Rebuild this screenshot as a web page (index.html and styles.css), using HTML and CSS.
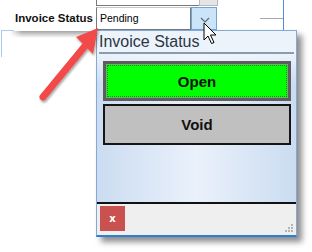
FILE: index.html
```html
<html>
<head>
    <link rel="stylesheet" href="styles.css">
    <title>Invoice Status</title>
</head>
<body>

<!-- bits of the form behind the dropdown -->
<div class="behind behind_box"></div>
<div class="behind behind_btn"></div>
<div class="behind behind_line"></div>
<div class="behind behind_rule"></div>
<div class="behind left_box"></div>
<div class="behind left_shadow"></div>

<div class="field_row">
    <label class="field_label">Invoice Status</label>
    <div class="combo_text">Pending</div>
    <div class="combo_button">
        <svg width="26" height="22" viewBox="0 0 26 22">
            <polyline points="9,10 13,14 17,10" fill="none" stroke="#5f6b78" stroke-width="1.2"/>
        </svg>
    </div>
</div>

<!-- dropdown popup -->
<div class="popup">
    <div class="popup_title">Invoice Status</div>
    <div class="title_rule"></div>
    <div class="popup_body">
        <button class="choice choice_open" type="button">Open</button>
        <button class="choice choice_void" type="button">Void</button>
    </div>
    <div class="popup_sep"></div>
    <div class="popup_footer">
        <button class="close_btn" type="button">x</button>
        <svg class="grip" width="10" height="10" viewBox="0 0 10 10">
            <rect x="7" y="1" width="2" height="2" fill="#b4b4b4"/>
            <rect x="4" y="4" width="2" height="2" fill="#b4b4b4"/>
            <rect x="7" y="4" width="2" height="2" fill="#b4b4b4"/>
            <rect x="1" y="7" width="2" height="2" fill="#b4b4b4"/>
            <rect x="4" y="7" width="2" height="2" fill="#b4b4b4"/>
            <rect x="7" y="7" width="2" height="2" fill="#b4b4b4"/>
        </svg>
    </div>
</div>

<!-- annotation arrow -->
<svg class="annotation" width="312" height="252" viewBox="0 0 312 252">
    <defs>
        <filter id="soft" x="-20%" y="-20%" width="140%" height="140%">
            <feDropShadow dx="1" dy="2" stdDeviation="1.2" flood-color="#000" flood-opacity="0.35"/>
        </filter>
    </defs>
    <g filter="url(#soft)">
        <line x1="43" y1="97" x2="85" y2="46" stroke="#f24a4a" stroke-width="7" stroke-linecap="round"/>
        <polygon points="98,28 76,37 93,54" fill="#f24a4a"/>
    </g>
</svg>

<!-- mouse pointer -->
<svg class="pointer" width="16" height="24" viewBox="0 0 16 24">
    <path d="M1,1 L1,18 L5,14 L8.5,21.5 L11,20.5 L7.5,13 L13,13 Z" fill="#fff" stroke="#000" stroke-width="1" stroke-linejoin="miter"/>
</svg>

</body>
</html>
```

FILE: styles.css
```css
body {
    margin: 0;
    width: 312px;
    height: 252px;
    position: relative;
    overflow: hidden;
    background-color: white;
    font-family: "Liberation Sans", Arial, sans-serif;
}

/* form pieces peeking out at the top */
.behind {
    position: absolute;
}
.behind_box {
    left: 96px;
    top: -2px;
    width: 102px;
    height: 6px;
    border: 1px solid #7a7a7a;
    background: white;
}
.behind_btn {
    left: 199px;
    top: -2px;
    width: 17px;
    height: 6px;
    border: 1px solid #b9b9b9;
    background: #e5e5e5;
}
.behind_line {
    left: 283px;
    top: 0;
    width: 1px;
    height: 30px;
    background: #4d8fd6;
}
.behind_rule {
    left: 260px;
    top: 18px;
    width: 23px;
    height: 1px;
    background: #a8a8a8;
}
.left_box {
    left: 1px;
    top: 30px;
    width: 12px;
    height: 26px;
    border-top: 1px solid #a9cbee;
    border-left: 1px solid #a9cbee;
}
.left_shadow {
    left: 10px;
    top: 31px;
    width: 86px;
    height: 7px;
    background: linear-gradient(to bottom, rgba(90,90,90,0.55), rgba(255,255,255,0));
    -webkit-mask-image: linear-gradient(to right, transparent, black 12px);
}

/* combo box row */
.field_row {
    display: flex;
    align-items: stretch;
    margin-top: 7px;
    height: 23px;
    padding-left: 15px;
}
.field_label {
    width: 81px;
    font-weight: bold;
    font-size: 11.5px;
    line-height: 23px;
    color: #111;
}
.combo_text {
    box-sizing: border-box;
    width: 95px;
    padding-left: 3px;
    border: 1px solid #7a7a7a;
    border-top-color: #c8c8c8;
    font-size: 10.5px;
    line-height: 20px;
    color: #000;
    background: white;
}
.combo_button {
    box-sizing: border-box;
    width: 26px;
    border: 1px solid #6ea6da;
    background: #cce4f7;
}
.combo_button svg {
    display: block;
}

/* popup */
.popup {
    position: absolute;
    left: 96px;
    top: 30px;
    width: 201px;
    height: 207px;
    box-sizing: border-box;
    border: 1px solid #84a9d4;
    border-bottom: 2px solid #2f7ed2;
    background: #eef3fa;
    box-shadow: 5px 5px 6px rgba(0, 0, 0, 0.45);
    display: flex;
    flex-direction: column;
}
.popup_title {
    height: 21px;
    padding-left: 2px;
    font-size: 16px;
    line-height: 21px;
    color: #2c3644;
    background: #edf3fb;
}
.title_rule {
    height: 2px;
    margin: 0 2px;
    background: #8a9bb1;
}
.popup_body {
    height: 148px;
    box-sizing: border-box;
    padding: 7px 5px 0 6px;
    display: flex;
    flex-direction: column;
    gap: 3px;
    background:
        linear-gradient(to bottom, rgba(240,245,252,0.9), rgba(240,245,252,0) 30px),
        linear-gradient(to right, #cbdcf1, #eaf1fb 50%, #cbdcf1);
}
.choice {
    position: relative;
    box-sizing: border-box;
    width: 188px;
    font-family: "Liberation Sans", Arial, sans-serif;
    font-weight: bold;
    font-size: 15px;
    color: #111;
    padding: 0;
}
.choice_open {
    height: 40px;
    border: 3px solid #5e5e5e;
    background: #00ff00;
}
.choice_open::after {
    content: "";
    position: absolute;
    left: 1px;
    top: 1px;
    right: 1px;
    bottom: 1px;
    border: 1px dotted #e000e0;
}
.choice_void {
    height: 41px;
    border: 2px solid #151515;
    background: #c0c0c0;
}
.popup_sep {
    height: 2px;
    background: #111;
}
.popup_footer {
    flex: 1;
    position: relative;
    padding: 2px 3px;
    background: #efefef;
}
.close_btn {
    width: 25px;
    height: 25px;
    border: none;
    padding: 0;
    background: #c9514f;
    color: white;
    font-family: "DejaVu Sans", sans-serif;
    font-weight: bold;
    font-size: 10px;
}
.grip {
    position: absolute;
    right: 2px;
    bottom: 2px;
}

/* overlays */
.annotation {
    position: absolute;
    left: 0;
    top: 0;
}
.pointer {
    position: absolute;
    left: 203px;
    top: 22px;
}
```
